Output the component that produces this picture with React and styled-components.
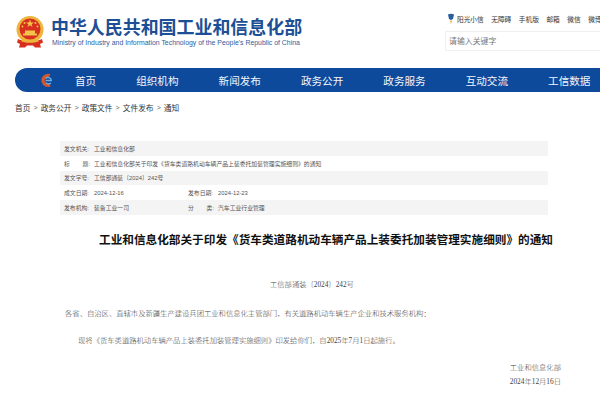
import React from 'react'
import styled, { createGlobalStyle } from 'styled-components'

const SANS = '"Liberation Sans", "Noto Sans CJK SC", sans-serif'
const SERIF = '"Liberation Serif", "Noto Sans CJK SC", serif'

const navItems = ['首页', '组织机构', '新闻发布', '政务公开', '政务服务', '互动交流', '工信数据']
const topLinks = ['无障碍', '手机版', '邮箱', '微信', '微博']
const crumbs = ['首页', '政务公开', '政策文件', '文件发布', '通知']

function Emblem() {
  return (
    <svg width="30" height="33" viewBox="0 0 30 33">
      <circle cx="15" cy="13.5" r="13.5" fill="#eeb53c" />
      <circle cx="15" cy="13" r="10.5" fill="#d8301f" />
      <polygon points="15,3.6 16,6.5 19,6.5 16.6,8.2 17.5,11 15,9.3 12.5,11 13.4,8.2 11,6.5 14,6.5" fill="#f4c748" />
      <circle cx="9.5" cy="7" r="1" fill="#f4c748" />
      <circle cx="20.5" cy="7" r="1" fill="#f4c748" />
      <circle cx="7.5" cy="10.5" r="0.9" fill="#f4c748" />
      <circle cx="22.5" cy="10.5" r="0.9" fill="#f4c748" />
      <path d="M8 17.5h14v2H8zM10 14.5h10v3H10z" fill="#f2c24a" />
      <path d="M3 23c3 1.6 7 2.400 12 2.400S24 24.600 27 23l1 3.500-3 1.500 1 3.500H20l-2-2h-6l-2 2H4l1-3.500-3-1.500z" fill="#d8301f" />
      <path d="M7 23.500c2.500.8 5 1.200 8 1.200s5.500-.4 8-1.200l.5 2c-2.500.9-5.300 1.300-8.500 1.300s-6-.4-8.500-1.300z" fill="#eeb53c" />
    </svg>
  )
}

function NavLogo() {
  return (
    <svg width="14" height="15" viewBox="0 0 14 15">
      <path d="M9.500 1.600A6 6 0 1 0 10 13l-1-2a3.600 3.600 0 1 1-.7-7z" fill="#d9572a" stroke="#d9572a" strokeWidth="1.200" strokeDasharray="2.400 .5" />
      <path d="M5.500 7.500h5.800a3.200 3.200 0 0 0-5.600-2M5.800 9.500a3.300 3.300 0 0 0 5 .6" fill="none" stroke="#6fb0e4" strokeWidth="1.300" />
    </svg>
  )
}

function SunIcon() {
  return (
    <svg width="8" height="12" viewBox="0 0 8 12">
      <path d="M1 1.500C2.500.5 5.500.5 7 1.500L6 6 4 7 2 6z" fill="#2b5c9e" />
      <path d="M2.500 7.500 4 11l1.500-3.500z" fill="#e8c46a" />
    </svg>
  )
}

export default function App() {
  return (
    <Page>
      <GlobalStyle />
      <Header>
        <Brand>
          <Emblem />
          <BrandText>
            <BrandName>中华人民共和国工业和信息化部</BrandName>
            <BrandEnglish>Ministry of Industry and Information Technology of the People's Republic of China</BrandEnglish>
          </BrandText>
        </Brand>
        <HeaderTools>
          <TopLinks>
            <SunLink><SunIcon />阳光小信</SunLink>
            {topLinks.map((t) => <TopLink key={t}>{t}</TopLink>)}
          </TopLinks>
          <SearchBox>请输入关键字</SearchBox>
        </HeaderTools>
      </Header>

      <NavBar>
        <NavLogoSlot><NavLogo /></NavLogoSlot>
        {navItems.map((t) => <NavItem key={t}>{t}</NavItem>)}
      </NavBar>

      <Breadcrumb>
        {crumbs.map((t, i) => (
          <React.Fragment key={t}>
            {i > 0 && <CrumbSep>&gt;</CrumbSep>}
            <span>{t}</span>
          </React.Fragment>
        ))}
      </Breadcrumb>

      <MetaTable>
        <MetaRow $shaded>
          <MetaLabel>发文机关:</MetaLabel><MetaValue>工业和信息化部</MetaValue>
        </MetaRow>
        <MetaRow>
          <MetaLabel $spread>标<span>题:</span></MetaLabel>
          <MetaValue>工业和信息化部关于印发《货车类道路机动车辆产品上装委托加装管理实施细则》的通知</MetaValue>
        </MetaRow>
        <MetaRow $shaded>
          <MetaLabel>发文字号:</MetaLabel><MetaValue>工信部通装〔2024〕242号</MetaValue>
        </MetaRow>
        <MetaRow>
          <MetaLabel>成文日期:</MetaLabel><MetaValue $half>2024-12-16</MetaValue>
          <MetaLabel>发布日期:</MetaLabel><MetaValue>2024-12-23</MetaValue>
        </MetaRow>
        <MetaRow $shaded>
          <MetaLabel>发布机构:</MetaLabel><MetaValue $half>装备工业一司</MetaValue>
          <MetaLabel $spread>分<span>类:</span></MetaLabel><MetaValue>汽车工业行业管理</MetaValue>
        </MetaRow>
      </MetaTable>

      <DocTitle>工业和信息化部关于印发《货车类道路机动车辆产品上装委托加装管理实施细则》的通知</DocTitle>
      <DocNumber>工信部通装〔2024〕242号</DocNumber>
      <Paragraph>各省、自治区、直辖市及新疆生产建设兵团工业和信息化主管部门，有关道路机动车辆生产企业和技术服务机构：</Paragraph>
      <Paragraph $indent>现将《货车类道路机动车辆产品上装委托加装管理实施细则》印发给你们，自2025年7月1日起施行。</Paragraph>
      <Signature>
        <span>工业和信息化部</span>
        <span>2024年12月16日</span>
      </Signature>
    </Page>
  )
}

const GlobalStyle = createGlobalStyle`
  html, body { margin: 0; padding: 0; background: #fff; overflow: hidden; }
`

const Page = styled.div`
  width: 600px;
  height: 403px;
  overflow: hidden;
  font-family: ${SANS};
`

const Header = styled.header`
  display: flex;
  height: 68px;
  padding-left: 15px;
  box-sizing: border-box;
`

const Brand = styled.div`
  display: flex;
  gap: 6px;
  padding-top: 16px;
  width: 430px;
  flex: none;
`

const BrandText = styled.div`
  display: flex;
  flex-direction: column;
  padding-top: 2px;
`

const BrandName = styled.div`
  font-size: 17.950px;
  line-height: 20px;
  font-weight: 700;
  color: #1c4f95;
  white-space: nowrap;
`

const BrandEnglish = styled.div`
  font-size: 6.900px;
  line-height: 9px;
  margin-top: 0;
  margin-left: 1px;
  color: #2f5d9c;
  white-space: nowrap;
`

const HeaderTools = styled.div`
  flex: none;
  width: 200px;
  padding-top: 13px;
`

const TopLinks = styled.div`
  display: flex;
  align-items: center;
  height: 12px;
  padding-left: 2px;
  gap: 7.500px;
  white-space: nowrap;
`

const TopLink = styled.span`
  font-size: 6.700px;
  color: #333;
`

const SunLink = styled(TopLink)`
  display: flex;
  align-items: center;
  gap: 2px;
`

const SearchBox = styled.div`
  margin-top: 6px;
  width: 190px;
  height: 20px;
  box-sizing: border-box;
  border: 1px solid #f0f0f0;
  padding-left: 3px;
  font-size: 7.900px;
  line-height: 19px;
  color: #777;
`

const NavBar = styled.nav`
  display: flex;
  align-items: center;
  gap: 40px;
  margin-left: 15px;
  padding-left: 25px;
  width: 640px;
  height: 24px;
  box-sizing: border-box;
  border-radius: 12px 0 0 12px;
  background: #0e4a9c;
`

const NavLogoSlot = styled.div`
  display: flex;
  flex: none;
  margin-right: -19px;
`

const NavItem = styled.div`
  flex: none;
  font-size: 10.600px;
  color: #f2f6fb;
  white-space: nowrap;
`

const Breadcrumb = styled.div`
  display: flex;
  align-items: center;
  margin: 10px 0 0 15px;
  height: 10px;
  gap: 2.600px;
  font-size: 7.700px;
  color: #333;
`

const CrumbSep = styled.span`
  font-size: 7px;
  color: #666;
  margin: 0 0.5px;
`

const MetaTable = styled.div`
  margin: 29px 52px 0 60px;
`

const MetaRow = styled.div`
  display: flex;
  align-items: center;
  height: 14.750px;
  padding-left: 4px;
  font-size: 5.830px;
  color: #555;
  background: ${(p) => (p.$shaded ? '#f4f4f4' : '#fff')};
`

const MetaLabel = styled.span`
  width: 30px;
  flex: none;
  display: flex;
  justify-content: ${(p) => (p.$spread ? 'space-between' : 'flex-start')};
  padding-right: ${(p) => (p.$spread ? '4px' : '0')};
  box-sizing: border-box;
  white-space: nowrap;
`

const MetaValue = styled.span`
  white-space: nowrap;
  width: ${(p) => (p.$half ? '94px' : 'auto')};
  flex: none;
`

const DocTitle = styled.h1`
  margin: 18px 0 0 99px;
  font-size: 11.650px;
  line-height: 14px;
  font-weight: 700;
  color: #111;
  white-space: nowrap;
`

const DocNumber = styled.div`
  margin: 33px 0 0 270px;
  font-family: ${SERIF};
  font-size: 7.300px;
  line-height: 10px;
  font-weight: 300;
  color: #444;
  white-space: nowrap;
`

const Paragraph = styled.p`
  margin: ${(p) => (p.$indent ? '17px' : '19px')} 0 0 ${(p) => (p.$indent ? '78px' : '65px')};
  font-family: ${SERIF};
  font-size: 7.320px;
  line-height: 10px;
  font-weight: 300;
  color: #444;
  white-space: nowrap;
`

const Signature = styled.div`
  display: flex;
  flex-direction: column;
  align-items: flex-end;
  gap: 4px;
  margin: 17px 39px 0 0;
  font-family: ${SERIF};
  font-size: 7.320px;
  line-height: 10px;
  font-weight: 300;
  color: #444;
  white-space: nowrap;
`
